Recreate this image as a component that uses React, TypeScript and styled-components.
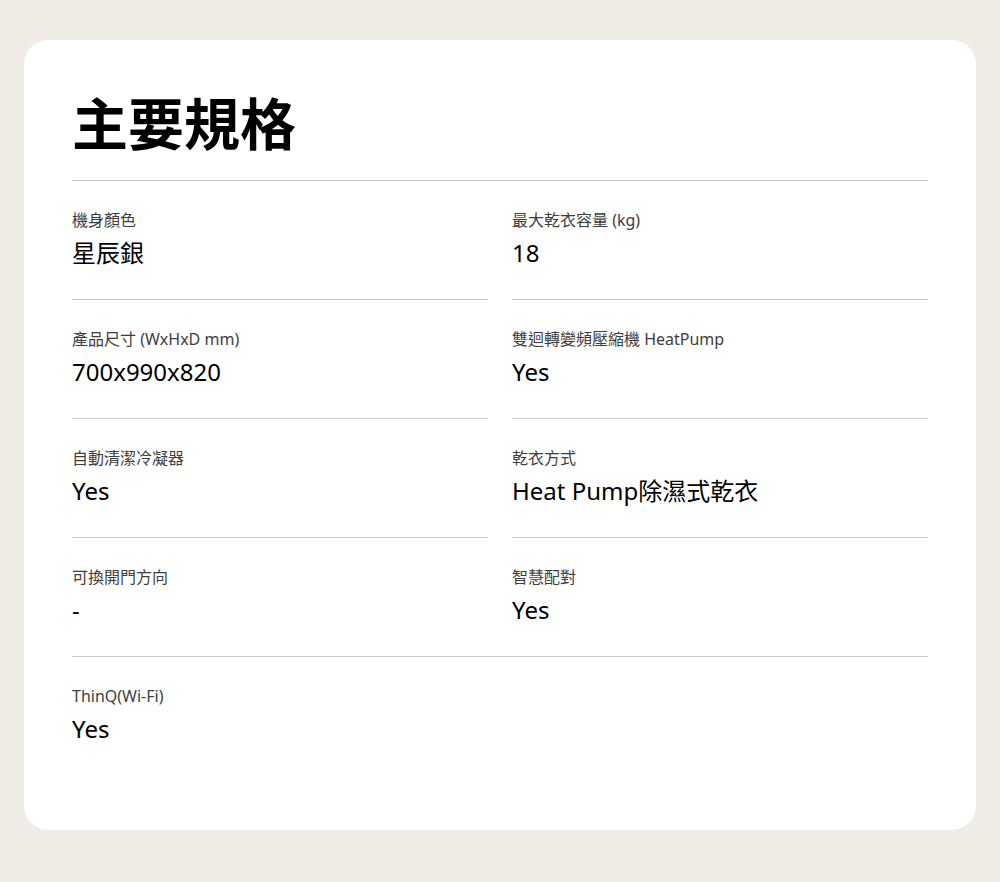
import { type FC } from 'react'
import styled, { createGlobalStyle } from 'styled-components'

interface Spec {
    label: string
    value: string
    divider?: boolean
    wide?: boolean
}

const specs: Spec[] = [
    { label: '機身顏色', value: '星辰銀', divider: true },
    { label: '最大乾衣容量 (kg)', value: '18', divider: true },
    { label: '產品尺寸 (WxHxD mm)', value: '700x990x820', divider: true },
    { label: '雙迴轉變頻壓縮機 HeatPump', value: 'Yes', divider: true },
    { label: '自動清潔冷凝器', value: 'Yes', divider: true },
    { label: '乾衣方式', value: 'Heat Pump除濕式乾衣', divider: true },
    { label: '可換開門方向', value: '-' },
    { label: '智慧配對', value: 'Yes' },
    { label: 'ThinQ(Wi-Fi)', value: 'Yes', wide: true },
]

const GlobalStyle = createGlobalStyle`
    html, body {
        margin: 0;
        padding: 0;
        background: #efebe5;
    }
    body {
        font-family: "Noto Sans", "Noto Sans CJK TC", sans-serif;
        -webkit-font-smoothing: antialiased;
    }
`

const Page = styled.div`
    padding: 40px 24px 52px;
`

const Card = styled.section`
    background: #fff;
    border-radius: 24px;
    padding: 44px 48px 55px;
`

const Title = styled.h2`
    margin: 0 0 23px;
    font-size: 56px;
    line-height: 73px;
    font-weight: 700;
    color: #000;
    font-family: "Noto Sans CJK TC", sans-serif;
`

const SpecGrid = styled.div`
    display: grid;
    grid-template-columns: 1fr 1fr;
    column-gap: 24px;
    border-top: 1px solid #cccbbf;
`

const SpecItem = styled.div<{ $divider?: boolean; $wide?: boolean }>`
    display: flex;
    flex-direction: column;
    gap: 5px;
    padding: 27px 0 30px;
    border-bottom: ${p => (p.$divider ? '1px solid #cccbbf' : 'none')};
    ${p => p.$wide && `
        grid-column: 1 / -1;
        border-top: 1px solid #cccbbf;
    `}
`

const Label = styled.span`
    font-size: 16px;
    line-height: 24px;
    color: #3e3e3e;
`

const Value = styled.span`
    font-size: 24px;
    line-height: 32px;
    color: #000;
`

const App: FC = () => {
    return (
        <Page>
            <GlobalStyle />
            <Card>
                <Title>主要規格</Title>
                <SpecGrid>
                    {specs.map((spec, index) => (
                        <SpecItem key={index} $divider={spec.divider} $wide={spec.wide}>
                            <Label>{spec.label}</Label>
                            <Value>{spec.value}</Value>
                        </SpecItem>
                    ))}
                </SpecGrid>
            </Card>
        </Page>
    )
}

export default App
